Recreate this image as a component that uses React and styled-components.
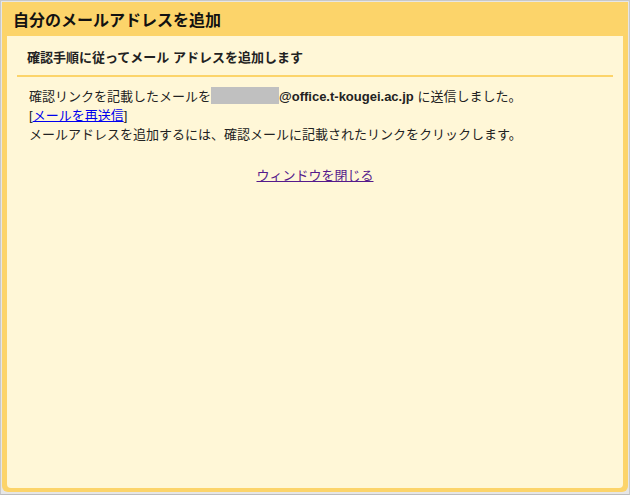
import React from "react";
import styled, { createGlobalStyle } from "styled-components";

const Global = createGlobalStyle`
  body { margin: 0; font-family: Arial, "Liberation Sans", "Noto Sans CJK JP", sans-serif; }
`;
const Outer = styled.div`
  width: 630px; height: 495px; box-sizing: border-box;
  border: 1px solid #c8c8c8; border-bottom-color: #bdbdbd; background: #e6e6e6;
  padding: 1px 1px 2px 1px; display: flex;
`;
const Frame = styled.div`
  flex: 1; display: flex; flex-direction: column; background: #fcd46a;
  border-radius: 0 0 6px 6px; padding: 0 5px 4px 5px;
`;
const Title = styled.h1`
  margin: 0; height: 34px; display: flex; align-items: center; padding-left: 6px;
  font-size: 16px; font-weight: bold; color: #111;
`;
const Content = styled.div`
  flex: 1; background: #fff7d7; padding: 0 10px; border-radius: 0 0 4px 4px;
`;
const Sub = styled.div`
  font-size: 13px; font-weight: bold; color: #222; padding: 11px 0 0 10px; height: 28px;
  border-bottom: 2px solid #fcd46a; box-sizing: content-box;
`;
const Body = styled.div`
  padding: 10px 0 0 12px; font-size: 13px; line-height: 19px; color: #222;
`;
const Masked = styled.span`
  display: inline-block; width: 68px; height: 17px; background: #c0c0c0; vertical-align: -3px;
`;
const A = styled.a`
  color: ${p => (p.$visited ? "#551a8b" : "#0000ee")}; text-decoration: underline;
`;
const Center = styled.div`
  text-align: center; font-size: 13px; margin-top: 21px;
`;

export default function App() {
  return (
    <Outer>
      <Global />
      <Frame>
        <Title>自分のメールアドレスを追加</Title>
        <Content>
          <Sub>確認手順に従ってメール アドレスを追加します</Sub>
          <Body>
            <div>確認リンクを記載したメールを<Masked /><b>@office.t-kougei.ac.jp</b> に送信しました。</div>
            <div>[<A href="#">メールを再送信</A>]</div>
            <div>メールアドレスを追加するには、確認メールに記載されたリンクをクリックします。</div>
          </Body>
          <Center><A $visited href="#">ウィンドウを閉じる</A></Center>
        </Content>
      </Frame>
    </Outer>
  );
}
